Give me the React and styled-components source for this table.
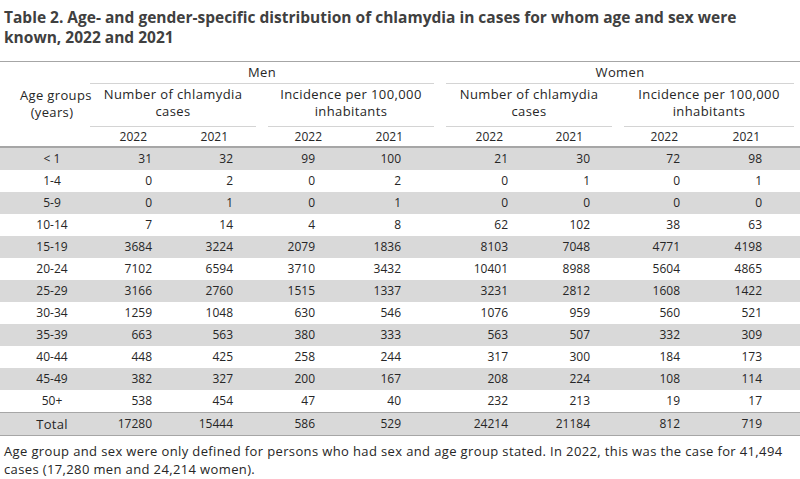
import React from "react";
import styled, { createGlobalStyle } from "styled-components";

const Global = createGlobalStyle`
  html, body { margin: 0; padding: 0; background: #ffffff; }
  body { font-family: "Open Sans", "DejaVu Sans", sans-serif; color: #262626; }
`;

const Page = styled.div`
  width: 800px;
  display: flex;
  flex-direction: column;
`;

const Title = styled.h1`
  margin: 0;
  padding: 7px 4px 0 4px;
  font-size: 15.5px;
  line-height: 20px;
  font-weight: 700;
  color: #404040;
  white-space: nowrap;
`;

const Table = styled.table`
  margin-top: 14px;
  width: 800px;
  table-layout: fixed;
  border-collapse: collapse;
  border-top: 1px solid #a6a6a6;
  font-size: 12px;
  color: #262626;
`;

const AgeHead = styled.th`
  font-weight: 400;
  font-size: 13px;
  letter-spacing: 0.35px;
  vertical-align: middle;
  text-align: center;
  padding: 0 0 0 20px;
  line-height: 17px;
  white-space: nowrap;
  border-bottom: 2px solid #a6a6a6;
`;

const GroupCell = styled.th`
  font-weight: 400;
  padding: 0;
`;

const GroupLabel = styled.div`
  margin: 0 6px;
  font-size: 13px;
  letter-spacing: 0.35px;
  line-height: 21px;
  text-align: center;
  border-bottom: 1px solid #d4d4d4;
`;

const SubLabel = styled.div`
  margin: 0 6px;
  padding: 2px 0 6px;
  font-size: 13px;
  letter-spacing: 0.4px;
  line-height: 17px;
  text-align: center;
  white-space: nowrap;
  border-bottom: 1px solid #d4d4d4;
`;

const YearCell = styled.th`
  font-weight: 400;
  height: 19px;
  padding: 0 ${(p) => p.$pr}px 0 0;
  text-align: right;
  line-height: 19px;
  border-bottom: 2px solid #a6a6a6;
`;

const Row = styled.tr`
  background: ${(p) => (p.$shade ? "#d9d9d9" : "#ffffff")};
  ${(p) =>
    p.$total
      ? "border-top: 1px solid #a6a6a6; border-bottom: 1px solid #a6a6a6;"
      : ""}
`;

const AgeCell = styled.td`
  height: ${(p) => (p.$total ? 21 : 22)}px;
  padding: 0 0 0 20px;
  text-align: center;
  line-height: 22px;
  letter-spacing: ${(p) => (p.$total ? "0.3px" : "0")};
  font-size: ${(p) => (p.$total ? "13px" : "12px")};
`;

const NumCell = styled.td`
  padding: 0 ${(p) => p.$pr}px 0 0;
  text-align: right;
  line-height: 22px;
`;

const Note = styled.p`
  margin: 6px 0 0 0;
  padding: 0 4px;
  font-size: 13px;
  letter-spacing: 0.37px;
  line-height: 18px;
  color: #262626;
  white-space: nowrap;
`;

const cols = [
  { w: 97, hp: 34, dp: 29 },
  { w: 81, hp: 34, dp: 29 },
  { w: 88, hp: 28, dp: 35 },
  { w: 90, hp: 37, dp: 39 },
  { w: 97, hp: 34, dp: 29 },
  { w: 81, hp: 35, dp: 28 },
  { w: 88, hp: 28, dp: 26 },
  { w: 94, hp: 40, dp: 38 },
];

const rows = [
  ["< 1", 31, 32, 99, 100, 21, 30, 72, 98],
  ["1-4", 0, 2, 0, 2, 0, 1, 0, 1],
  ["5-9", 0, 1, 0, 1, 0, 0, 0, 0],
  ["10-14", 7, 14, 4, 8, 62, 102, 38, 63],
  ["15-19", 3684, 3224, 2079, 1836, 8103, 7048, 4771, 4198],
  ["20-24", 7102, 6594, 3710, 3432, 10401, 8988, 5604, 4865],
  ["25-29", 3166, 2760, 1515, 1337, 3231, 2812, 1608, 1422],
  ["30-34", 1259, 1048, 630, 546, 1076, 959, 560, 521],
  ["35-39", 663, 563, 380, 333, 563, 507, 332, 309],
  ["40-44", 448, 425, 258, 244, 317, 300, 184, 173],
  ["45-49", 382, 327, 200, 167, 208, 224, 108, 114],
  ["50+", 538, 454, 47, 40, 232, 213, 19, 17],
];
const total = ["Total", 17280, 15444, 586, 529, 24214, 21184, 812, 719];

const years = ["2022", "2021", "2022", "2021", "2022", "2021", "2022", "2021"];

export default function App() {
  return (
    <Page>
      <Global />
      <Title>
        Table 2. Age- and gender-specific distribution of chlamydia in cases for whom age and sex were
        <br />
        known, 2022 and 2021
      </Title>
      <Table>
        <colgroup>
          <col style={{ width: 84 }} />
          {cols.map((c, i) => (
            <col key={i} style={{ width: c.w }} />
          ))}
        </colgroup>
        <thead>
          <tr>
            <AgeHead rowSpan={3}>
              Age groups
              <br />
              (years)
            </AgeHead>
            <GroupCell colSpan={4}>
              <GroupLabel>Men</GroupLabel>
            </GroupCell>
            <GroupCell colSpan={4}>
              <GroupLabel>Women</GroupLabel>
            </GroupCell>
          </tr>
          <tr>
            {[0, 1, 2, 3].map((i) => (
              <GroupCell key={i} colSpan={2}>
                {i % 2 === 0 ? (
                  <SubLabel>
                    Number of chlamydia
                    <br />
                    cases
                  </SubLabel>
                ) : (
                  <SubLabel>
                    Incidence per 100,000
                    <br />
                    inhabitants
                  </SubLabel>
                )}
              </GroupCell>
            ))}
          </tr>
          <tr>
            {years.map((y, i) => (
              <YearCell key={i} $pr={cols[i].hp}>
                {y}
              </YearCell>
            ))}
          </tr>
        </thead>
        <tbody>
          {rows.map((r, ri) => (
            <Row key={ri} $shade={ri % 2 === 0}>
              <AgeCell>{r[0]}</AgeCell>
              {r.slice(1).map((v, ci) => (
                <NumCell key={ci} $pr={cols[ci].dp}>
                  {v}
                </NumCell>
              ))}
            </Row>
          ))}
          <Row $shade $total>
            <AgeCell $total>{total[0]}</AgeCell>
            {total.slice(1).map((v, ci) => (
              <NumCell key={ci} $pr={cols[ci].dp}>
                {v}
              </NumCell>
            ))}
          </Row>
        </tbody>
      </Table>
      <Note>
        Age group and sex were only defined for persons who had sex and age group stated. In 2022, this was the case for 41,494
        <br />
        cases (17,280 men and 24,214 women).
      </Note>
    </Page>
  );
}
